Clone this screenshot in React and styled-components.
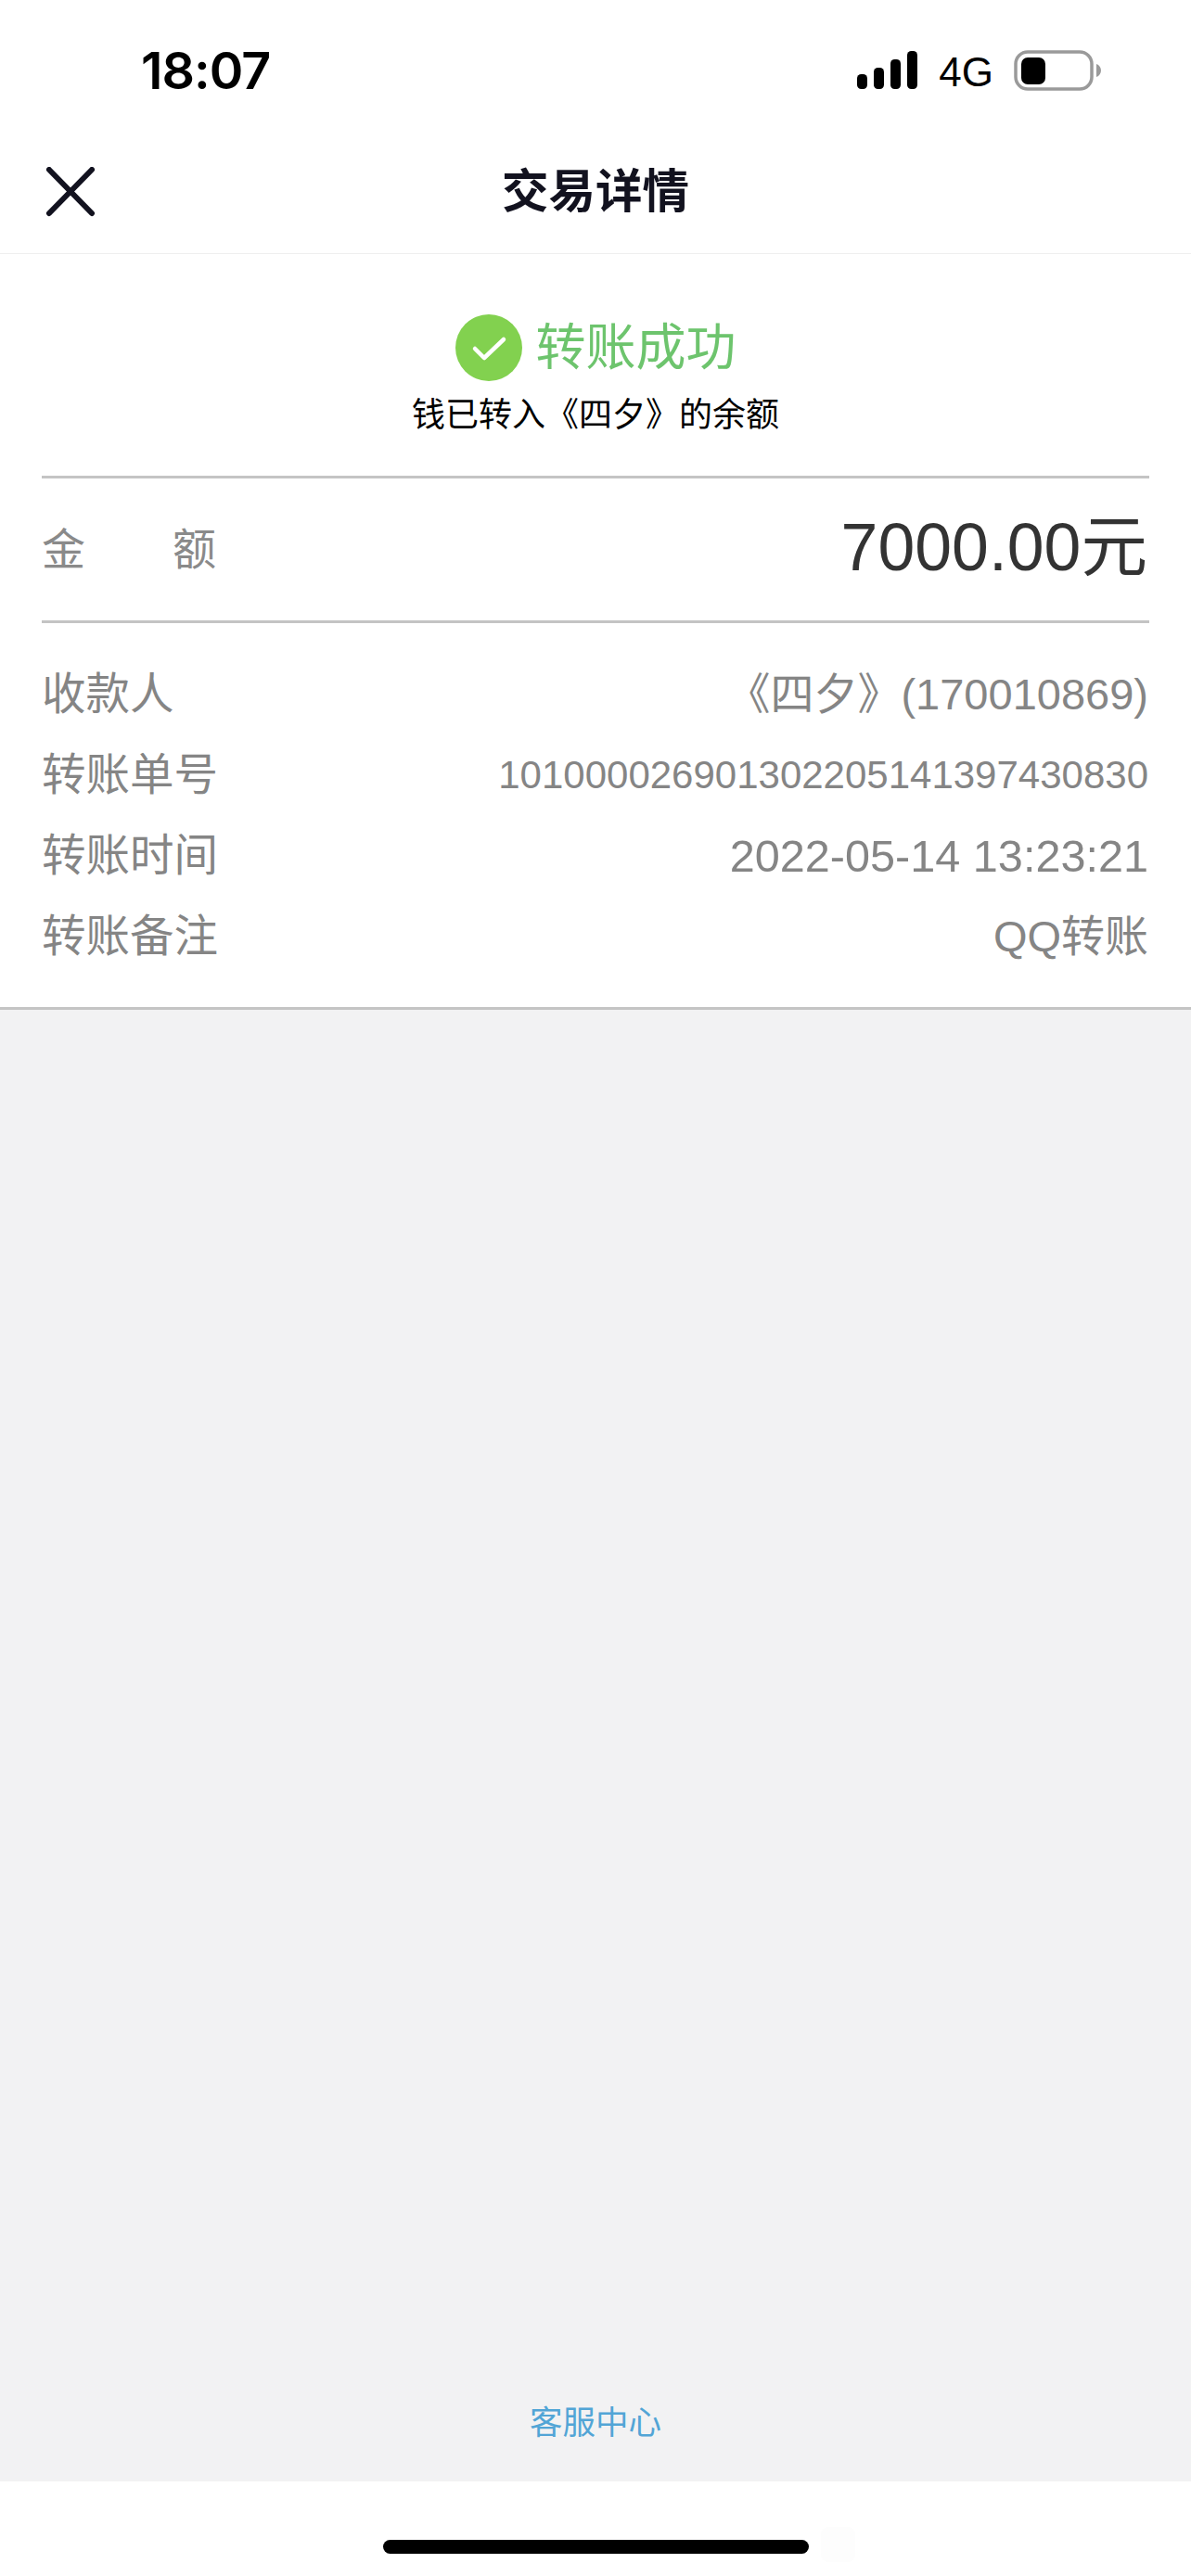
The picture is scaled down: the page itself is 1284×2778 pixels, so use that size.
import React from "react";
import styled, { createGlobalStyle } from "styled-components";

const Global = createGlobalStyle`
  html, body { margin: 0; padding: 0; background: #fff; }
  * { box-sizing: border-box; }
  body { font-family: "Liberation Sans", "Noto Sans CJK SC", sans-serif; }
`;

const Page = styled.div`
  width: 1284px;
  height: 2778px;
  display: flex;
  flex-direction: column;
  background: #fff;
`;

const StatusBar = styled.div`
  height: 140px;
  display: flex;
  align-items: flex-start;
  justify-content: space-between;
  padding: 50px 97px 0 152px;
`;

const Time = styled.div`
  font-family: "Inter", "Liberation Sans", sans-serif;
  font-size: 55.5px;
  font-weight: 600;
  line-height: 52px;
  letter-spacing: -1px;
  color: #000;
`;

const StatusIcons = styled.div`
  display: flex;
  align-items: center;
  height: 46px;
  margin-top: 3px;
`;

const Network = styled.span`
  font-size: 44px;
  line-height: 46px;
  color: #000;
  margin: 3px 22px 0 22px;
`;

const Nav = styled.header`
  height: 134px;
  display: grid;
  grid-template-columns: 1fr auto 1fr;
  align-items: center;
  padding: 0 49px;
  border-bottom: 1px solid #eeeeee;
`;

const CloseButton = styled.button`
  width: 54px;
  height: 54px;
  padding: 0;
  border: 0;
  background: none;
  display: flex;
`;

const NavTitle = styled.h1`
  margin: 0;
  font-size: 50.5px;
  line-height: 60px;
  font-weight: 700;
  color: #12121f;
`;

const Content = styled.section`
  background: #fff;
  padding: 0 45px;
  border-bottom: 3px solid #c4c4c4;
`;

const Result = styled.div`
  height: 242px;
  border-bottom: 3px solid #c4c4c4;
  padding-top: 65px;
  display: flex;
  flex-direction: column;
  align-items: center;
`;

const ResultHead = styled.div`
  display: flex;
  align-items: center;
  gap: 15px;
  height: 72px;
`;

const ResultTitle = styled.div`
  font-size: 54px;
  line-height: 72px;
  color: #6dc46d;
`;

const ResultNote = styled.div`
  margin-top: 13px;
  font-size: 36px;
  line-height: 48px;
  color: #000;
`;

const AmountRow = styled.div`
  height: 156px;
  border-bottom: 3px solid #c4c4c4;
  display: flex;
  align-items: center;
  justify-content: space-between;
`;

const AmountLabel = styled.div`
  width: 188px;
  display: flex;
  justify-content: space-between;
  font-size: 47px;
  line-height: 60px;
  color: #8a8a8a;
`;

const AmountValue = styled.div`
  font-size: 71.6px;
  line-height: 84px;
  color: #333;
  margin: 0 2px 6px 0;
`;

const Details = styled.div`
  padding: 33px 0 33px;
`;

const DetailRow = styled.div`
  height: 87px;
  display: flex;
  align-items: center;
  justify-content: space-between;
`;

const DetailLabel = styled.div`
  font-size: 47.5px;
  line-height: 60px;
  color: #858585;
`;

const DetailValue = styled.div`
  font-size: ${(p) => p.$size || 47}px;
  line-height: 60px;
  color: #858585;
  margin-right: 1px;
`;

const Filler = styled.main`
  flex: 1;
  background: #f2f2f3;
  display: flex;
  align-items: flex-end;
  justify-content: center;
  padding-bottom: 33px;
`;

const HelpLink = styled.a`
  font-size: 35.5px;
  line-height: 60px;
  color: #52a5d6;
`;

const HomeArea = styled.footer`
  position: relative;
  height: 102px;
  background: #fff;
  display: flex;
  justify-content: center;
  padding-top: 63px;
`;

const HomeBar = styled.div`
  width: 459px;
  height: 15px;
  border-radius: 8px;
  background: #000;
`;

const Ghost = styled.div`
  position: absolute;
  left: 885px;
  top: 49px;
  width: 37px;
  height: 38px;
  border-radius: 8px;
  background: #fdfdfd;
`;

const rows = [
  { label: "收款人", value: "《四夕》(170010869)" },
  { label: "转账单号", value: "101000026901302205141397430830", size: 42 },
  { label: "转账时间", value: "2022-05-14 13:23:21", size: 48.6 },
  { label: "转账备注", value: "QQ转账" },
];

const Signal = () => (
  <svg width="66" height="42" viewBox="0 0 66 42" fill="#000">
    <rect x="0" y="25" width="11" height="16" rx="4.5" />
    <rect x="18" y="18" width="11" height="23" rx="4.5" />
    <rect x="36" y="9" width="11" height="32" rx="4.5" />
    <rect x="54" y="0" width="11" height="41" rx="4.5" />
  </svg>
);

const Battery = () => (
  <svg width="94" height="44" viewBox="0 0 94 44">
    <rect x="2" y="2" width="82" height="40" rx="13" fill="none" stroke="#9a9a9a" strokeWidth="3.5" />
    <rect x="8" y="8" width="26" height="29" rx="7" fill="#000" />
    <path d="M89 15c3 1 5 4 5 7s-2 6-5 7z" fill="#9a9a9a" />
  </svg>
);

const CloseIcon = () => (
  <svg width="54" height="54" viewBox="0 0 54 54" fill="none" stroke="#12121f" strokeWidth="6" strokeLinecap="round">
    <path d="M4 3L50 50M50 3L4 50" />
  </svg>
);

const CheckCircle = () => (
  <svg width="72" height="72" viewBox="0 0 72 72">
    <circle cx="36" cy="36" r="36" fill="#82d14f" />
    <path d="M21 37l10 10L52 27" fill="none" stroke="#fff" strokeWidth="4.5" strokeLinecap="round" strokeLinejoin="round" />
  </svg>
);

export default function App() {
  return (
    <Page>
      <Global />
      <StatusBar>
        <Time>18:07</Time>
        <StatusIcons>
          <Signal />
          <Network>4G</Network>
          <Battery />
        </StatusIcons>
      </StatusBar>
      <Nav>
        <CloseButton aria-label="关闭"><CloseIcon /></CloseButton>
        <NavTitle>交易详情</NavTitle>
      </Nav>
      <Content>
        <Result>
          <ResultHead>
            <CheckCircle />
            <ResultTitle>转账成功</ResultTitle>
          </ResultHead>
          <ResultNote>钱已转入《四夕》的余额</ResultNote>
        </Result>
        <AmountRow>
          <AmountLabel><span>金</span><span>额</span></AmountLabel>
          <AmountValue>7000.00元</AmountValue>
        </AmountRow>
        <Details>
          {rows.map((r) => (
            <DetailRow key={r.label}>
              <DetailLabel>{r.label}</DetailLabel>
              <DetailValue $size={r.size}>{r.value}</DetailValue>
            </DetailRow>
          ))}
        </Details>
      </Content>
      <Filler>
        <HelpLink>客服中心</HelpLink>
      </Filler>
      <HomeArea>
        <HomeBar />
        <Ghost />
      </HomeArea>
    </Page>
  );
}
